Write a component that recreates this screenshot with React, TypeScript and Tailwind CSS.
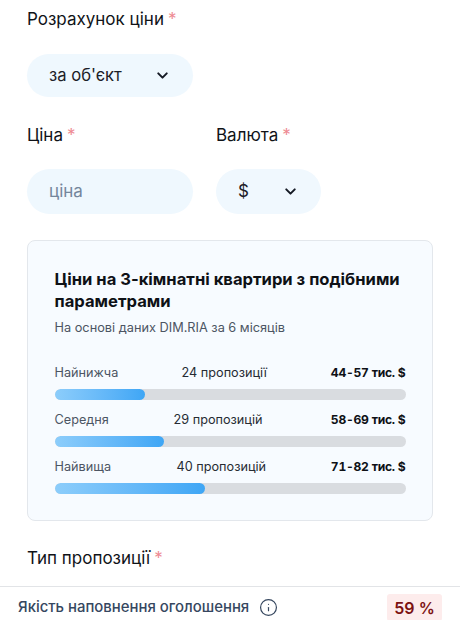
import { ChevronDown, Info } from "lucide-react";

const rows = [
  { label: "Найнижча", count: "24 пропозиції", price: "44-57 тис. $", width: 90.5, shift: "pl-[47px]" },
  { label: "Середня", count: "29 пропозицій", price: "58-69 тис. $", width: 109.5, shift: "pl-[39px]" },
  { label: "Найвища", count: "40 пропозицій", price: "71-82 тис. $", width: 150.5, shift: "pl-[42px]" },
];

function Label({ text }: { text: string }) {
  return (
    <div className="flex gap-[4px] text-[17px] leading-[24px] text-[#101318]">
      {text}
      <span className="text-[#ee8a92]">*</span>
    </div>
  );
}

export default function App() {
  return (
    <div className="flex h-[620px] w-[460px] flex-col overflow-hidden bg-white font-['Inter',sans-serif]">
      <div className="flex-1 overflow-hidden pl-[27px] pr-[27px] pt-[7px]">
        <Label text="Розрахунок ціни" />
        <div className="mt-[23px] flex h-[43px] w-[166px] items-center justify-between rounded-full bg-[#eff8fe] pl-[22px] pr-[22px] text-[16.6px] text-[#1c2027]">
          за об'єкт
          <ChevronDown size={17} strokeWidth={2.8} className="-ml-[1px] text-[#151a24]" />
        </div>

        <div className="mt-[26px] flex gap-[23px]">
          <div className="w-[166px]">
            <Label text="Ціна" />
            <div className="mt-[22px] flex h-[45px] items-center rounded-full bg-[#eff8fe] pl-[22px] text-[17px] text-[#74869c]">
              ціна
            </div>
          </div>
          <div className="w-[105px]">
            <Label text="Валюта" />
            <div className="mt-[22px] flex h-[45px] items-center justify-between rounded-full bg-[#f0f8fe] pl-[22px] pr-[22px] text-[17px] text-[#1c2027]">
              $
              <ChevronDown size={17} strokeWidth={2.8} className="text-[#151a24]" />
            </div>
          </div>
        </div>

        <div className="mt-[26px] h-[281px] w-[406px] rounded-[8px] border border-[#e3e7ec] bg-[#f7fbff] pl-[26.5px] pr-[26.5px] pt-[27px]">
          <div className="text-[16.6px] font-bold leading-[22px] text-[#0e1116]">
            Ціни на 3-кімнатні квартири з подібними параметрами
          </div>
          <div className="mt-[6px] text-[12.75px] leading-[20px] text-[#4c5563]">На основі даних DIM.RIA за 6 місяців</div>

          <div className="mt-[23px] flex flex-col gap-[8px]">
            {rows.map((row) => (
              <div key={row.label}>
                <div className="grid h-[24px] grid-cols-[1fr_auto] items-center text-[12.7px]">
                  <div className="flex items-center">
                    <span className="w-[80px] text-[#4c5563]">{row.label}</span>
                    <span className={`${row.shift} text-[#262b33]`}>{row.count}</span>
                  </div>
                  <span className="text-[12.1px] font-bold tabular-nums tracking-[-0.25px] text-[#0e1116]">{row.price}</span>
                </div>
                <div className="mt-[4px] h-[11px] overflow-hidden rounded-full bg-[#d9dce0]">
                  <div
                    className="h-full rounded-full bg-gradient-to-r from-[#8ccdfb] to-[#3ea6f5]"
                    style={{ width: row.width }}
                  />
                </div>
              </div>
            ))}
          </div>
        </div>

        <div className="mt-[25px]">
          <Label text="Тип пропозиції" />
        </div>
      </div>

      <div className="flex h-[34px] items-start justify-between border-t border-[#e2e4e7] pl-[18px] pr-[18px] pt-[7px]">
        <div className="flex h-[26px] items-center gap-[10px] text-[14.9px] font-medium text-[#36475f]">
          Якість наповнення оголошення
          <Info size={19} strokeWidth={1.5} />
        </div>
        <div className="flex h-[27px] w-[55px] items-center justify-center rounded-[3px] bg-[#fdecec] text-[16px] font-semibold text-[#7c1212]">
          59 %
        </div>
      </div>
    </div>
  );
}
